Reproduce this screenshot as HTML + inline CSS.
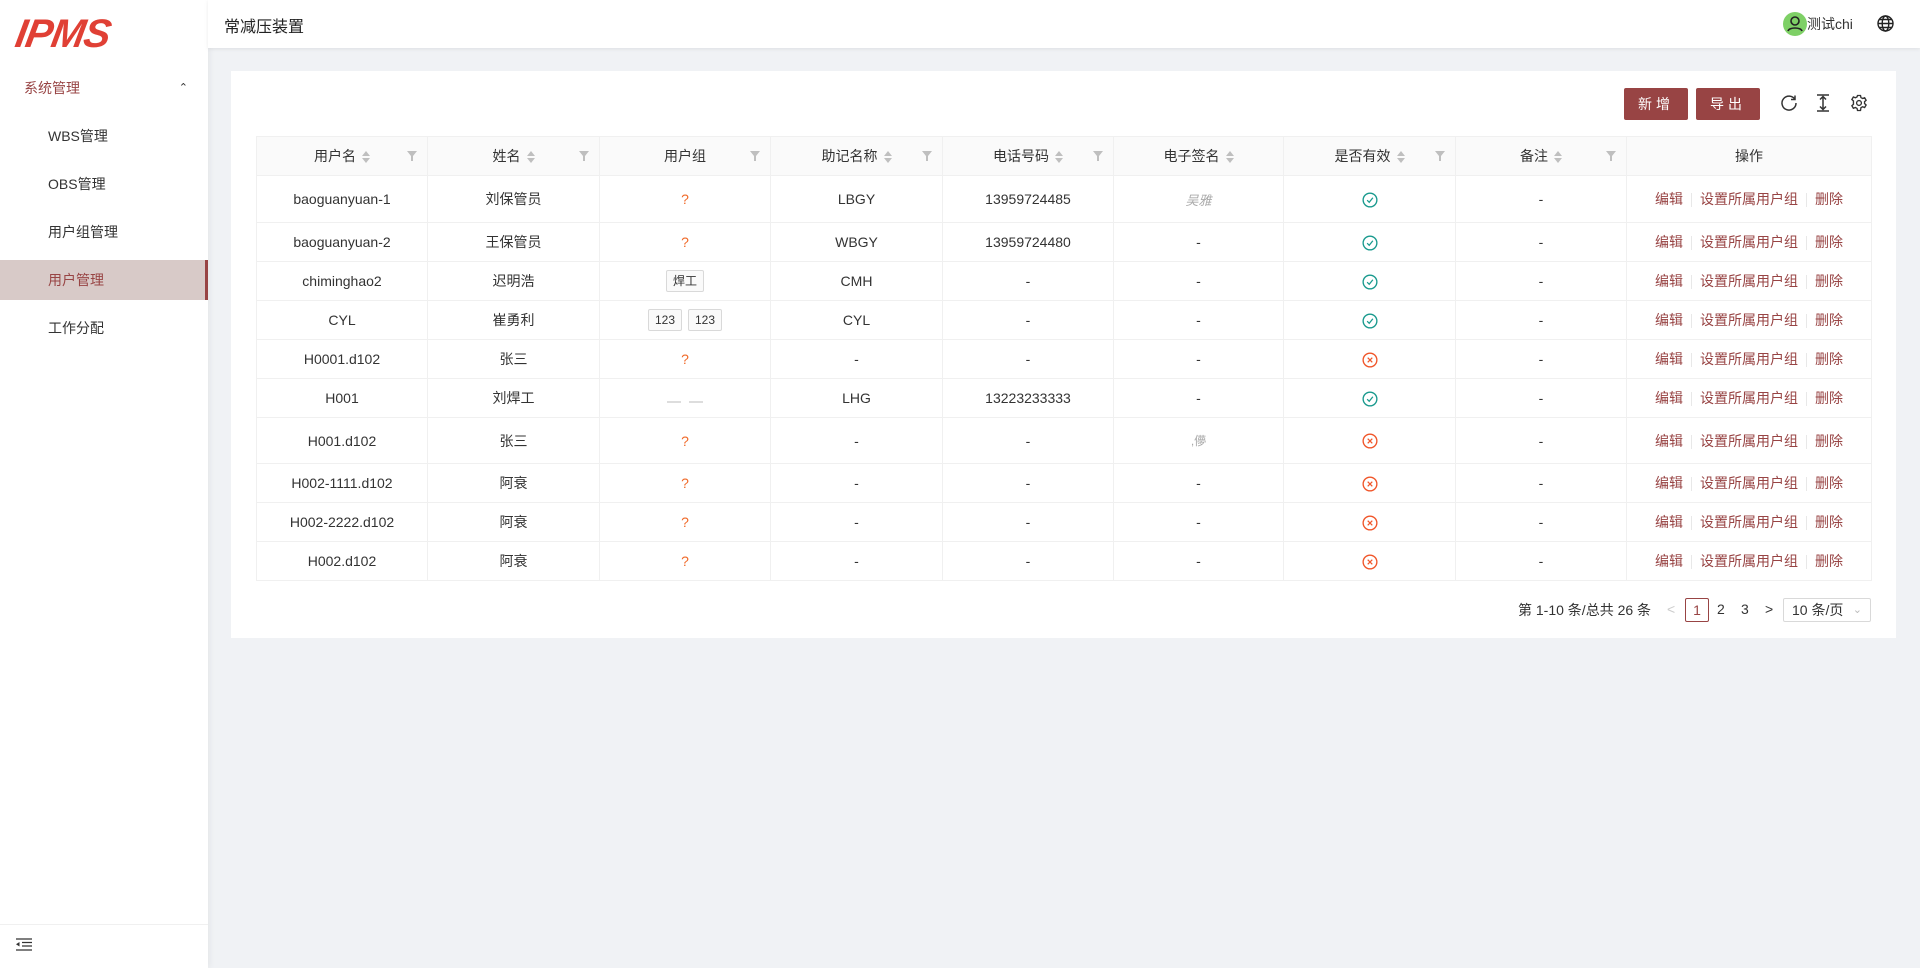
<!DOCTYPE html>
<html><head><meta charset="utf-8"><style>
*{box-sizing:border-box;margin:0;padding:0}
body{width:1920px;height:968px;background:#f0f2f5;font-family:"Liberation Sans","Noto Sans CJK SC",sans-serif;font-size:14px;color:#333;position:relative;overflow:hidden}
.side{position:absolute;left:0;top:0;width:208px;height:968px;background:#fff;box-shadow:2px 0 6px rgba(0,0,0,.05)}
.logo{position:absolute;left:16px;top:12px;font:italic 900 40px "Liberation Sans",sans-serif;color:#e04035;letter-spacing:-1px;transform:skewX(-10deg)}
.menu{position:absolute;left:0;width:208px;height:40px;line-height:40px;font-size:14px;color:#333}
.top{position:absolute;left:208px;top:0;right:0;height:48px;background:#fff;box-shadow:0 1px 4px rgba(0,0,0,.08)}
.card{position:absolute;left:231px;top:71px;width:1665px;height:567px;background:#fff}
.btn{position:absolute;top:17px;width:64px;height:32px;background:#984444;color:#fff;border-radius:2px;text-align:center;line-height:32px;font-size:14px;letter-spacing:4px}
table{position:absolute;left:25px;top:65px;border-collapse:collapse;table-layout:fixed;width:1615px}
td,th{border:1px solid #f0f0f0;text-align:center;font-size:14px;font-weight:normal;color:#333;position:relative}
th{background:#fafafa;height:39px}
td{height:39px}
td svg.c{width:16px;height:16px;vertical-align:middle}
.s{display:inline-block;vertical-align:middle;margin-left:6px;width:8px;height:12px;position:relative}
.s:before,.s:after{content:"";position:absolute;left:0;border-left:4px solid transparent;border-right:4px solid transparent}
.s:before{top:0;border-bottom:5px solid #bfbfbf}.s:after{bottom:0;border-top:5px solid #bfbfbf}
.f{position:absolute;right:10px;top:14px;width:10px;height:10px}
.q{color:#f06a2a}
.tag{display:inline-block;border:1px solid #d9d9d9;background:#fafafa;font-size:12px;padding:0 6px;line-height:20px;border-radius:2px;margin:0 3px}
.op a{color:#984444;text-decoration:none}
.op i{display:inline-block;width:1px;height:14px;background:#e8e8e8;margin:0 8px;vertical-align:middle}
</style></head><body>
<div class="side">
<div class="logo">IPMS</div>
<div class="menu" style="top:68px;padding-left:24px;color:#984444">系统管理<span style="position:absolute;right:20px;top:0;font-size:11px;color:#333">&#8963;</span></div>
<div class="menu" style="top:116px;padding-left:48px">WBS管理</div>
<div class="menu" style="top:164px;padding-left:48px">OBS管理</div>
<div class="menu" style="top:212px;padding-left:48px">用户组管理</div>
<div class="menu" style="top:260px;padding-left:48px;background:#d8cac8;color:#984444;border-right:3px solid #984444">用户管理</div>
<div class="menu" style="top:308px;padding-left:48px">工作分配</div>
<div style="position:absolute;left:0;top:924px;width:208px;border-top:1px solid #f0f0f0"></div>
<svg style="position:absolute;left:16px;top:938px" width="16" height="13" viewBox="0 0 16 13"><path d="M0 1H16M6 4.5H16M6 8H16M0 12H16" stroke="#333" stroke-width="1.3"/><path d="M0 6.2L3.5 4V8.5Z" fill="#333"/></svg>
</div>
<div class="top">
<div style="position:absolute;left:16px;top:13px;font-size:16px;color:#222">常减压装置</div>
<div style="position:absolute;left:1575px;top:12px;width:24px;height:24px;border-radius:50%;background:#7ed066"><svg width="24" height="24" viewBox="0 0 24 24"><circle cx="12" cy="9" r="4" fill="none" stroke="#222" stroke-width="1.6"/><path d="M5 19c1-4 13-4 14 0" fill="none" stroke="#222" stroke-width="1.6"/></svg></div>
<div style="position:absolute;left:1599px;top:14px;font-size:14px;color:#333">测试chi</div>
<svg style="position:absolute;left:1669px;top:15px" width="17" height="17" viewBox="0 0 17 17" fill="none" stroke="#222" stroke-width="1.4"><circle cx="8.5" cy="8.5" r="7.5"/><ellipse cx="8.5" cy="8.5" rx="3.3" ry="7.5"/><path d="M1 8.5H16M2.5 4.5H14.5M2.5 12.5H14.5"/></svg>
</div>
<div class="card">
<div class="btn" style="left:1393px">新增</div>
<div class="btn" style="left:1465px">导出</div>
<svg style="position:absolute;left:1549px;top:23px" width="18" height="18" viewBox="0 0 18 18" fill="none" stroke="#333" stroke-width="1.5"><path d="M15 5.5A7 7 0 1 0 16 9"/><path d="M15 1.5V5.5H11"/></svg>
<svg style="position:absolute;left:1584px;top:23px" width="16" height="18" viewBox="0 0 16 18" fill="none" stroke="#333" stroke-width="1.5"><path d="M2 1H14M2 17H14M8 3V15M5 5.5L8 2.5 11 5.5M5 12.5L8 15.5 11 12.5"/></svg>
<svg style="position:absolute;left:1619px;top:23px" width="18" height="18" viewBox="0 0 24 24" fill="none" stroke="#333" stroke-width="1.8"><circle cx="12" cy="12" r="3.2"/><path d="M10 2h4l.6 2.8 2.2 1.2 2.7-1 2 3.4-2.1 1.9v2.4l2.1 1.9-2 3.4-2.7-1-2.2 1.2L14 22h-4l-.6-2.8-2.2-1.2-2.7 1-2-3.4 2.1-1.9V9.3L2.5 7.4l2-3.4 2.7 1 2.2-1.2z"/></svg>
<table>
<colgroup><col width="171"><col width="172"><col width="171"><col width="172"><col width="171"><col width="170"><col width="172"><col width="171"><col width="245"></colgroup>
<tr>
<th>用户名<span class="s"></span><svg class="f" viewBox="0 0 10 10"><path d="M0 0H10L6 5V10H4V5Z" fill="#bfbfbf"/></svg></th>
<th>姓名<span class="s"></span><svg class="f" viewBox="0 0 10 10"><path d="M0 0H10L6 5V10H4V5Z" fill="#bfbfbf"/></svg></th>
<th>用户组<svg class="f" viewBox="0 0 10 10"><path d="M0 0H10L6 5V10H4V5Z" fill="#bfbfbf"/></svg></th>
<th>助记名称<span class="s"></span><svg class="f" viewBox="0 0 10 10"><path d="M0 0H10L6 5V10H4V5Z" fill="#bfbfbf"/></svg></th>
<th>电话号码<span class="s"></span><svg class="f" viewBox="0 0 10 10"><path d="M0 0H10L6 5V10H4V5Z" fill="#bfbfbf"/></svg></th>
<th>电子签名<span class="s"></span></th>
<th>是否有效<span class="s"></span><svg class="f" viewBox="0 0 10 10"><path d="M0 0H10L6 5V10H4V5Z" fill="#bfbfbf"/></svg></th>
<th>备注<span class="s"></span><svg class="f" viewBox="0 0 10 10"><path d="M0 0H10L6 5V10H4V5Z" fill="#bfbfbf"/></svg></th>
<th>操作</th>
</tr>
<tr style="height:47px"><td>baoguanyuan-1</td><td>刘保管员</td><td class="q">?</td><td>LBGY</td><td>13959724485</td><td style="color:#aaa;font-style:italic;font-size:13px">吴雅</td><td><svg class="c" viewBox="0 0 14 14"><circle cx="7" cy="7" r="6" fill="none" stroke="#1a9a8e" stroke-width="1.2"/><path d="M4.5 7.2L6.3 9 9.5 5" fill="none" stroke="#1a9a8e" stroke-width="1.1"/></svg></td><td>-</td><td class="op"><a>编辑</a><i></i><a>设置所属用户组</a><i></i><a>删除</a></td></tr>
<tr><td>baoguanyuan-2</td><td>王保管员</td><td class="q">?</td><td>WBGY</td><td>13959724480</td><td>-</td><td><svg class="c" viewBox="0 0 14 14"><circle cx="7" cy="7" r="6" fill="none" stroke="#1a9a8e" stroke-width="1.2"/><path d="M4.5 7.2L6.3 9 9.5 5" fill="none" stroke="#1a9a8e" stroke-width="1.1"/></svg></td><td>-</td><td class="op"><a>编辑</a><i></i><a>设置所属用户组</a><i></i><a>删除</a></td></tr>
<tr><td>chiminghao2</td><td>迟明浩</td><td><span class="tag">焊工</span></td><td>CMH</td><td>-</td><td>-</td><td><svg class="c" viewBox="0 0 14 14"><circle cx="7" cy="7" r="6" fill="none" stroke="#1a9a8e" stroke-width="1.2"/><path d="M4.5 7.2L6.3 9 9.5 5" fill="none" stroke="#1a9a8e" stroke-width="1.1"/></svg></td><td>-</td><td class="op"><a>编辑</a><i></i><a>设置所属用户组</a><i></i><a>删除</a></td></tr>
<tr><td>CYL</td><td>崔勇利</td><td><span class="tag">123</span><span class="tag">123</span></td><td>CYL</td><td>-</td><td>-</td><td><svg class="c" viewBox="0 0 14 14"><circle cx="7" cy="7" r="6" fill="none" stroke="#1a9a8e" stroke-width="1.2"/><path d="M4.5 7.2L6.3 9 9.5 5" fill="none" stroke="#1a9a8e" stroke-width="1.1"/></svg></td><td>-</td><td class="op"><a>编辑</a><i></i><a>设置所属用户组</a><i></i><a>删除</a></td></tr>
<tr><td>H0001.d102</td><td>张三</td><td class="q">?</td><td>-</td><td>-</td><td>-</td><td><svg class="c" viewBox="0 0 14 14"><circle cx="7" cy="7" r="6" fill="none" stroke="#f0562a" stroke-width="1.2"/><path d="M5 5L9 9M9 5L5 9" stroke="#f0562a" stroke-width="1.1"/></svg></td><td>-</td><td class="op"><a>编辑</a><i></i><a>设置所属用户组</a><i></i><a>删除</a></td></tr>
<tr><td>H001</td><td>刘焊工</td><td><span style="display:inline-block;width:14px;height:2px;background:#ddd;margin:6px 4px 0"></span><span style="display:inline-block;width:14px;height:2px;background:#ddd;margin:6px 4px 0"></span></td><td>LHG</td><td>13223233333</td><td>-</td><td><svg class="c" viewBox="0 0 14 14"><circle cx="7" cy="7" r="6" fill="none" stroke="#1a9a8e" stroke-width="1.2"/><path d="M4.5 7.2L6.3 9 9.5 5" fill="none" stroke="#1a9a8e" stroke-width="1.1"/></svg></td><td>-</td><td class="op"><a>编辑</a><i></i><a>设置所属用户组</a><i></i><a>删除</a></td></tr>
<tr style="height:46px"><td>H001.d102</td><td>张三</td><td class="q">?</td><td>-</td><td>-</td><td style="color:#aaa;font-size:12px">,儚</td><td><svg class="c" viewBox="0 0 14 14"><circle cx="7" cy="7" r="6" fill="none" stroke="#f0562a" stroke-width="1.2"/><path d="M5 5L9 9M9 5L5 9" stroke="#f0562a" stroke-width="1.1"/></svg></td><td>-</td><td class="op"><a>编辑</a><i></i><a>设置所属用户组</a><i></i><a>删除</a></td></tr>
<tr><td>H002-1111.d102</td><td>阿衰</td><td class="q">?</td><td>-</td><td>-</td><td>-</td><td><svg class="c" viewBox="0 0 14 14"><circle cx="7" cy="7" r="6" fill="none" stroke="#f0562a" stroke-width="1.2"/><path d="M5 5L9 9M9 5L5 9" stroke="#f0562a" stroke-width="1.1"/></svg></td><td>-</td><td class="op"><a>编辑</a><i></i><a>设置所属用户组</a><i></i><a>删除</a></td></tr>
<tr><td>H002-2222.d102</td><td>阿衰</td><td class="q">?</td><td>-</td><td>-</td><td>-</td><td><svg class="c" viewBox="0 0 14 14"><circle cx="7" cy="7" r="6" fill="none" stroke="#f0562a" stroke-width="1.2"/><path d="M5 5L9 9M9 5L5 9" stroke="#f0562a" stroke-width="1.1"/></svg></td><td>-</td><td class="op"><a>编辑</a><i></i><a>设置所属用户组</a><i></i><a>删除</a></td></tr>
<tr><td>H002.d102</td><td>阿衰</td><td class="q">?</td><td>-</td><td>-</td><td>-</td><td><svg class="c" viewBox="0 0 14 14"><circle cx="7" cy="7" r="6" fill="none" stroke="#f0562a" stroke-width="1.2"/><path d="M5 5L9 9M9 5L5 9" stroke="#f0562a" stroke-width="1.1"/></svg></td><td>-</td><td class="op"><a>编辑</a><i></i><a>设置所属用户组</a><i></i><a>删除</a></td></tr>
</table>
<div style="position:absolute;left:1287px;top:529px;font-size:14px;color:#333">第 1-10 条/总共 26 条</div>
<div style="position:absolute;left:1436px;top:530px;color:#ccc;font-size:14px">&lt;</div>
<div style="position:absolute;left:1454px;top:527px;width:24px;height:24px;border:1px solid #984444;border-radius:2px;text-align:center;line-height:22px;color:#984444">1</div>
<div style="position:absolute;left:1486px;top:530px">2</div>
<div style="position:absolute;left:1510px;top:530px">3</div>
<div style="position:absolute;left:1534px;top:530px">&gt;</div>
<div style="position:absolute;left:1552px;top:527px;width:88px;height:24px;border:1px solid #d9d9d9;border-radius:2px;line-height:22px;padding-left:8px">10 条/页<span style="position:absolute;right:8px;top:0;color:#bbb;font-size:11px">&#8964;</span></div>
</div>
</body></html>
